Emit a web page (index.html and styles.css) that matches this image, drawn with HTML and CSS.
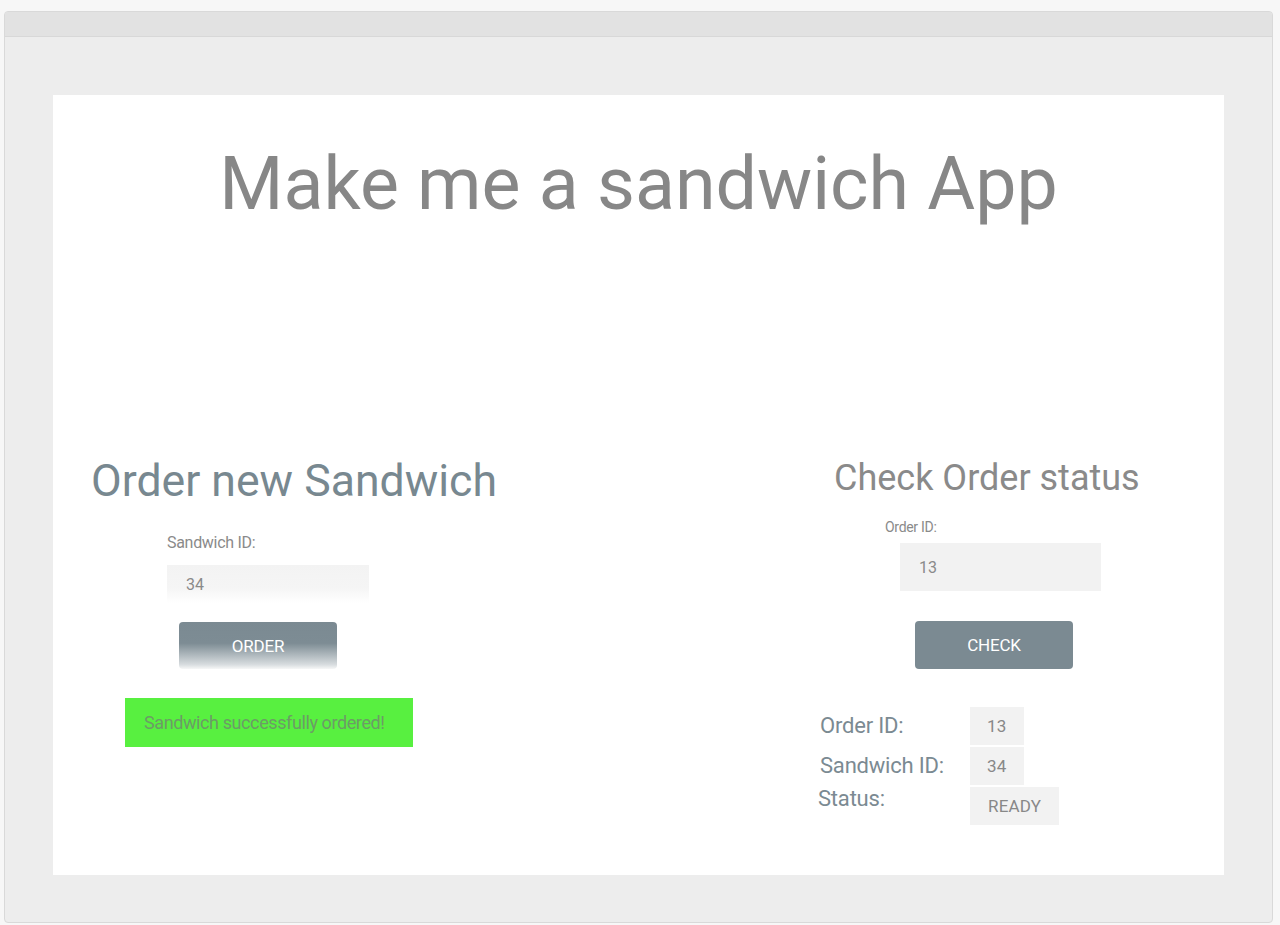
FILE: index.html
```html
<!DOCTYPE html>
<html lang="en">
<head>
<meta charset="utf-8">
<title>Make me a sandwich App</title>
<link rel="stylesheet" href="styles.css">
</head>
<body>
<div class="window">
  <div class="window-bar"></div>
  <div class="window-body">
    <main class="card">
      <h1 class="title">Make me a sandwich App</h1>
      <div class="columns">
        <section class="col col-left">
          <h2 class="order-heading">Order new Sandwich</h2>
          <label class="small-label sandwich-label">Sandwich ID:</label>
          <div class="input input-fade">34</div>
          <button class="btn btn-fade">ORDER</button>
          <div class="success">Sandwich successfully ordered!</div>
        </section>
        <section class="col col-right">
          <h2 class="check-heading">Check Order status</h2>
          <label class="small-label order-label">Order ID:</label>
          <div class="input input-flat">13</div>
          <button class="btn btn-flat">CHECK</button>
          <div class="status-table">
            <div class="row"><span class="row-label">Order ID:</span><span class="value">13</span></div>
            <div class="row"><span class="row-label">Sandwich ID:</span><span class="value">34</span></div>
            <div class="row"><span class="row-label row-label-top">Status:</span><span class="value value-wide">READY</span></div>
          </div>
        </section>
      </div>
    </main>
  </div>
</div>
</body>
</html>
```

FILE: styles.css
```css
* { box-sizing: border-box; }
html, body { margin: 0; padding: 0; }
body {
  background: #f7f7f7;
  font-family: Roboto, "Liberation Sans", Arial, sans-serif;
  padding: 11px 7px 2px 4px;
}
.window {
  width: 1269px;
  height: 912px;
  border: 1px solid #d9d9d9;
  border-radius: 4px;
  overflow: hidden;
  background: #ededed;
  display: flex;
  flex-direction: column;
}
.window-bar {
  height: 25px;
  background: #e2e2e2;
  border-bottom: 1px solid #d8d8d8;
  flex: none;
}
.window-body {
  padding: 58px 48px 0 48px;
}
.card {
  background: #ffffff;
  width: 1171px;
  height: 780px;
  padding-top: 49px;
}
.title {
  margin: 0;
  text-align: center;
  font-weight: 400;
  font-size: 73.5px;
  line-height: 80px;
  color: #878787;
}
.columns {
  display: grid;
  grid-template-columns: 585px 586px;
  margin-top: 229px;
}
.col {
  display: flex;
  flex-direction: column;
  align-items: flex-start;
}
.order-heading {
  margin: 2px 0 0 38px;
  font-weight: 400;
  font-size: 44.6px;
  line-height: 52px;
  color: #788890;
}
.check-heading {
  margin: 4px 0 0 196px;
  font-weight: 400;
  font-size: 36px;
  line-height: 42px;
  color: #8a8a8a;
}
.small-label {
  color: #8a8a8a;
  letter-spacing: -0.3px;
}
.sandwich-label {
  margin: 26px 0 0 114px;
  font-size: 16px;
  line-height: 20px;
}
.order-label {
  margin: 19px 0 0 247px;
  font-size: 14px;
  line-height: 18px;
}
.input {
  color: #8a8a8a;
  font-size: 16px;
  display: flex;
  align-items: center;
}
.input-fade {
  margin: 12px 0 0 114px;
  width: 202px;
  height: 38px;
  padding-left: 19px;
  background: linear-gradient(#f3f3f3, #f5f5f5 60%, #ffffff);
}
.input-flat {
  margin: 7px 0 0 262px;
  width: 201px;
  height: 48px;
  padding-left: 19px;
  background: #f2f2f2;
}
.btn {
  border: none;
  border-radius: 4px;
  color: #ffffff;
  font-family: inherit;
  font-size: 17px;
  letter-spacing: -0.2px;
  width: 158px;
  height: 47px;
  padding: 0;
}
.btn-fade {
  margin: 19px 0 0 126px;
  background: linear-gradient(#7b8a92, #7d8c94 45%, #d6dbde 90%, #f6f7f7);
}
.btn-flat {
  margin: 30px 0 0 277px;
  height: 48px;
  background: #7b8a92;
}
.success {
  margin: 29px 0 0 72px;
  width: 288px;
  height: 49px;
  padding-left: 19px;
  display: flex;
  align-items: center;
  background: #58f040;
  color: #6c9c66;
  font-size: 18px;
  letter-spacing: -0.4px;
}
.status-table {
  margin: 38px 0 0 181px;
  display: grid;
  row-gap: 2px;
}
.row {
  display: grid;
  grid-template-columns: 151px auto;
  align-items: center;
  height: 38px;
}
.row-label {
  font-size: 22px;
  line-height: 24px;
  color: #7b8a92;
  letter-spacing: -0.2px;
  padding-left: 1px;
}
.row-label-top {
  align-self: start;
  padding-left: 0;
  margin-left: -1px;
}
.value {
  justify-self: start;
  height: 38px;
  padding: 0 17px;
  display: flex;
  align-items: center;
  background: #f2f2f2;
  color: #888888;
  font-size: 17px;
  letter-spacing: 0.2px;
}
.value-wide {
  padding: 0 18px;
}
```
